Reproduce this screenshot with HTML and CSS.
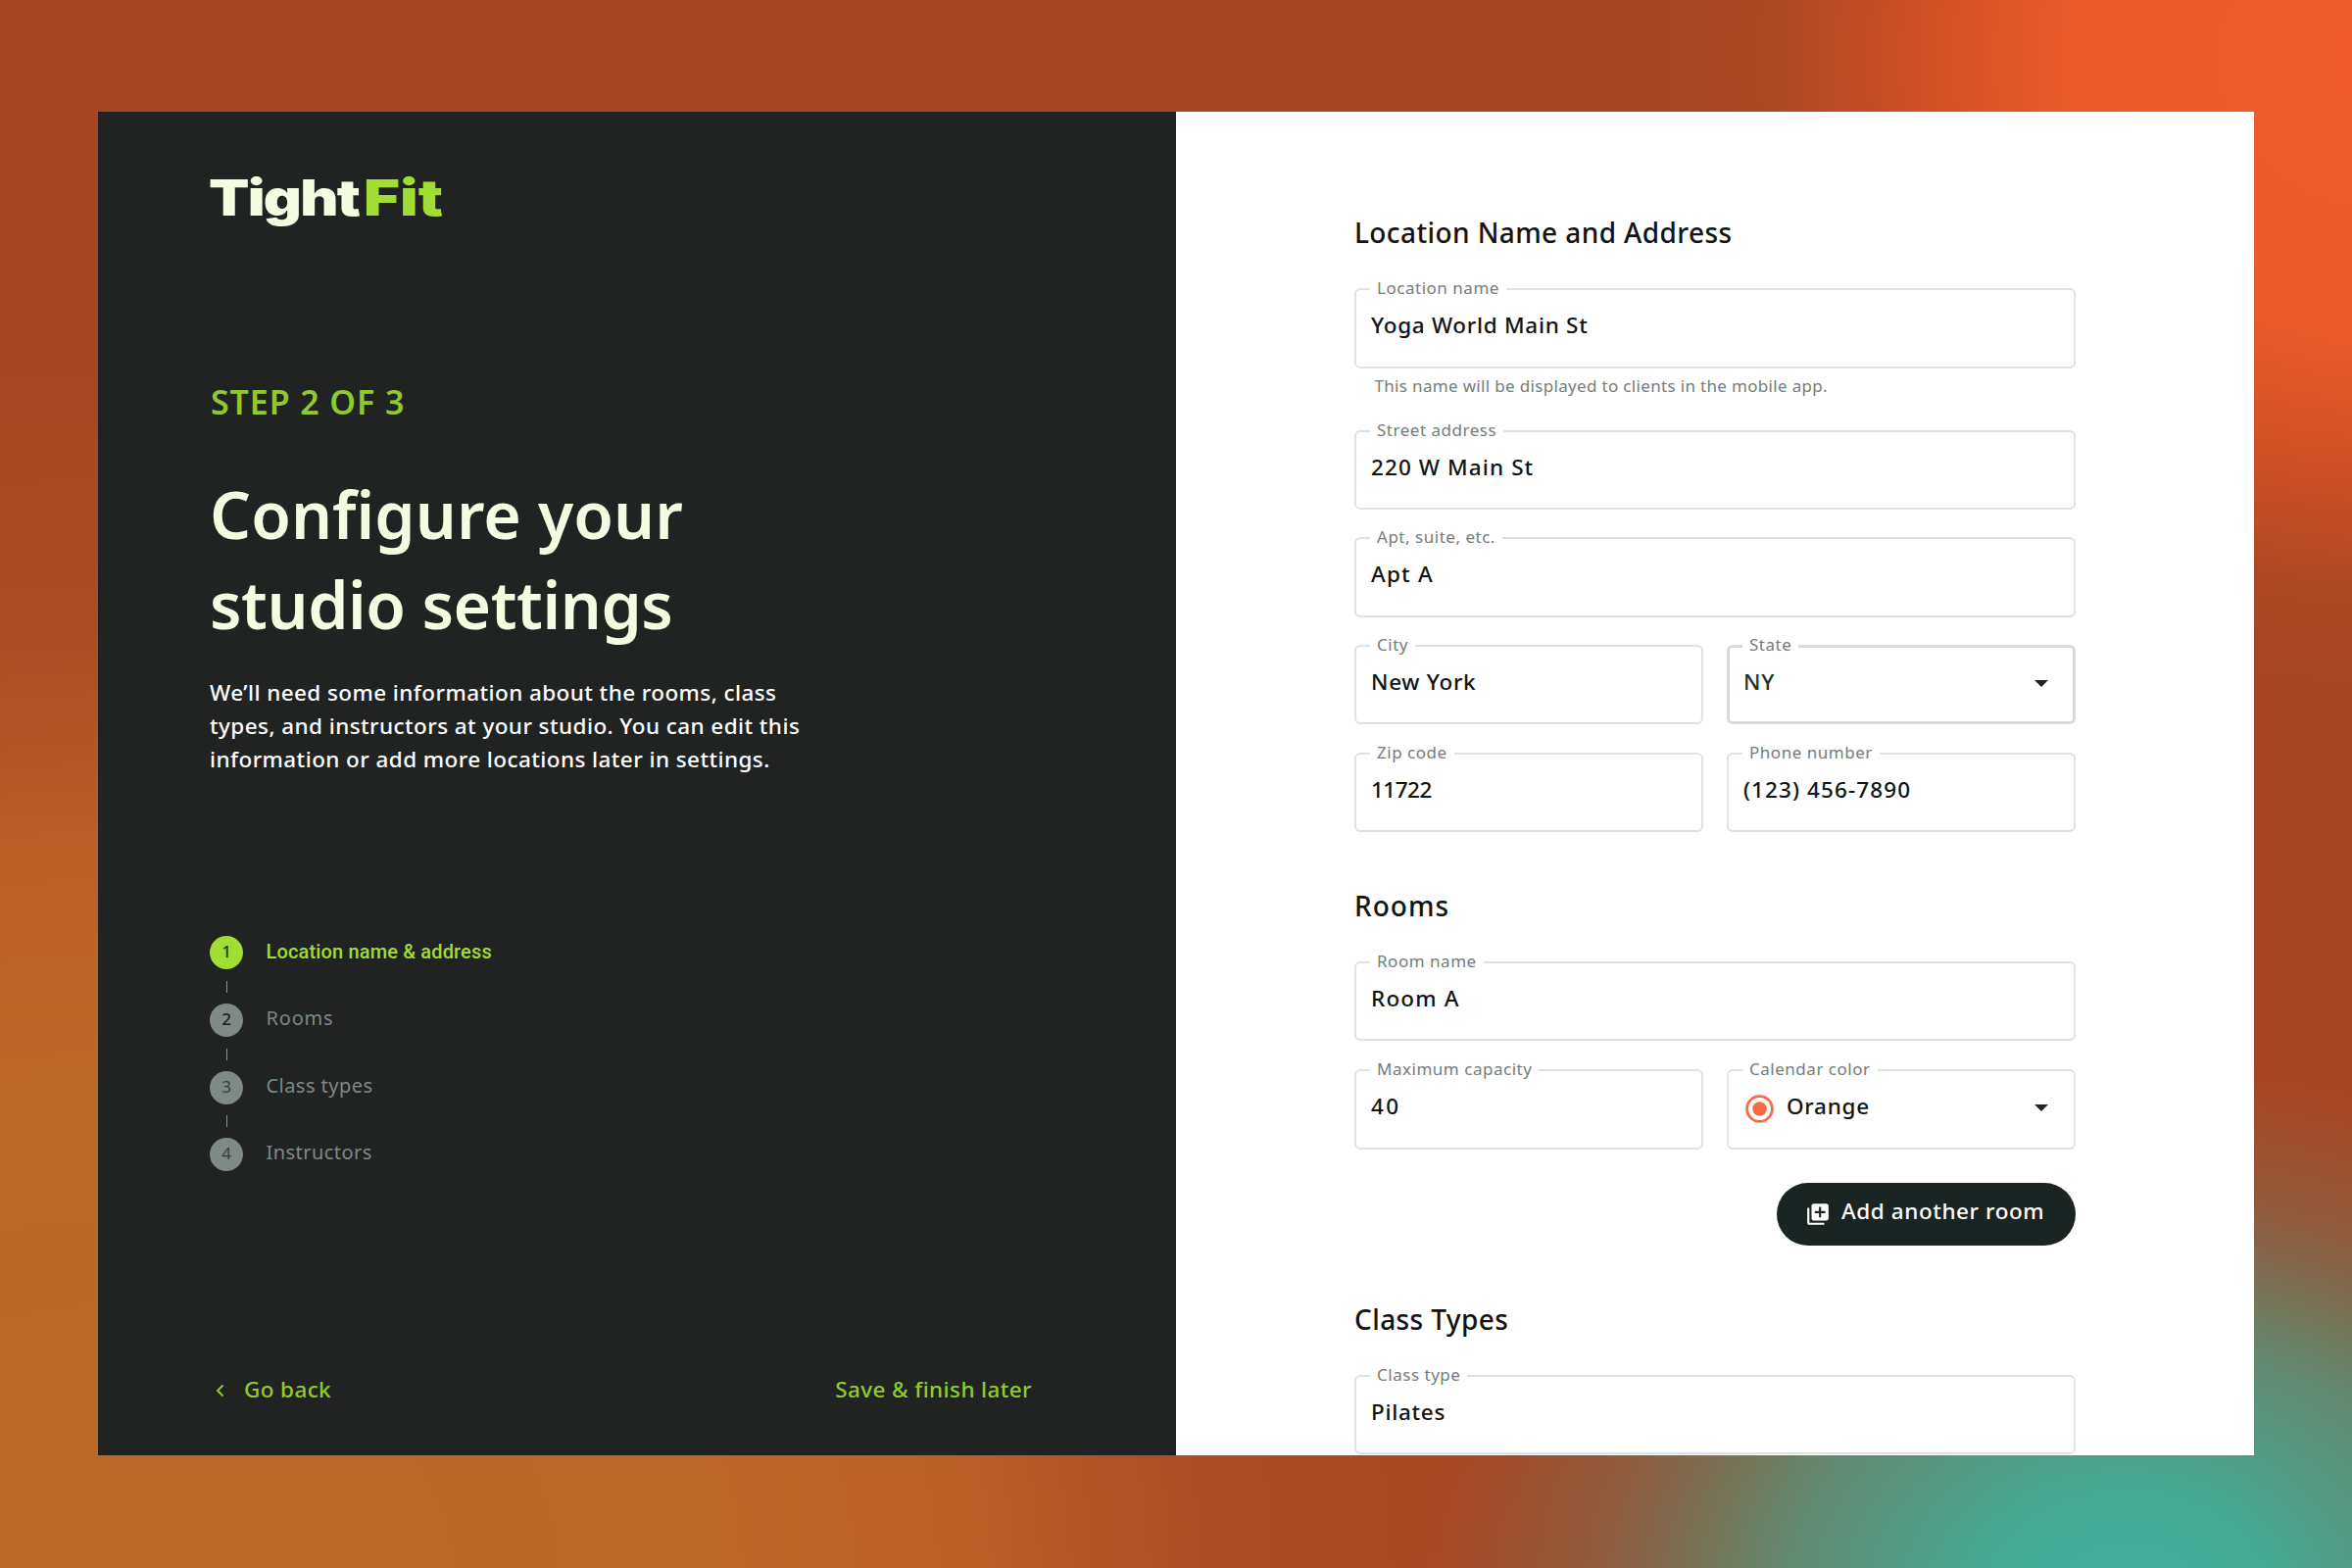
FILE: index.html
```
<!DOCTYPE html>
<html lang="en">
<head>
<meta charset="utf-8">
<title>TightFit – Configure your studio settings</title>
<link rel="stylesheet" href="styles.css">
</head>
<body>
<main class="window">
  <section class="intro">
    <svg class="logo" width="260" height="76" viewBox="0 0 260 76" role="img" aria-label="TightFit">
      <text class="logo-tight" x="-1" y="52" textLength="153" lengthAdjust="spacingAndGlyphs">Tight</text>
      <text class="logo-fit" x="157" y="52" textLength="81" lengthAdjust="spacingAndGlyphs">Fit</text>
    </svg>
    <p class="step-count">STEP 2 OF 3</p>
    <h1 class="title">Configure your<br><span class="title-end">studio settings</span></h1>
    <p class="lead">We’ll need some information about the rooms, class<br>types, and instructors at your studio. You can edit this<br>information or add more locations later in settings.</p>
    <ol class="steps">
      <li class="step step-active"><span class="step-num">1</span><span class="step-name">Location name &amp; address</span></li>
      <li class="step step-current"><span class="step-num">2</span><span class="step-name">Rooms</span></li>
      <li class="step"><span class="step-num">3</span><span class="step-name">Class types</span></li>
      <li class="step"><span class="step-num">4</span><span class="step-name">Instructors</span></li>
    </ol>
    <nav class="actions">
      <a class="action"><svg class="chevron" width="9" height="14" viewBox="0 0 9 14"><path d="M7.5 1.5 2 7l5.500 5.500" fill="none" stroke="currentColor" stroke-width="2"/></svg>Go back</a>
      <a class="action">Save &amp; finish later</a>
    </nav>
  </section>

  <section class="form">
    <h2 class="heading">Location Name and Address</h2>
    <div class="field"><span class="label">Location name</span><span class="value">Yoga World Main St</span></div>
    <p class="helper">This name will be displayed to clients in the mobile app.</p>
    <div class="rows">
      <div class="field"><span class="label">Street address</span><span class="value value-num">220 W Main St</span></div>
      <div class="field"><span class="label">Apt, suite, etc.</span><span class="value value-room">Apt A</span></div>
      <div class="pair">
        <div class="field"><span class="label">City</span><span class="value">New York</span></div>
        <div class="field field-focus"><span class="label">State</span><span class="value">NY</span><svg class="caret" width="14" height="7" viewBox="0 0 14 7"><path d="M0 0h14L7 7z" fill="currentColor"/></svg></div>
      </div>
      <div class="pair">
        <div class="field"><span class="label">Zip code</span><span class="value value-zip">11722</span></div>
        <div class="field"><span class="label">Phone number</span><span class="value value-num">(123) 456-7890</span></div>
      </div>
    </div>

    <h2 class="heading heading-next heading-rooms">Rooms</h2>
    <div class="rows rows-flush">
      <div class="field"><span class="label">Room name</span><span class="value value-room">Room A</span></div>
      <div class="pair">
        <div class="field"><span class="label">Maximum capacity</span><span class="value value-wide">40</span></div>
        <div class="field"><span class="label">Calendar color</span><svg class="swatch" width="29" height="29" viewBox="0 0 29 29"><circle cx="14.500" cy="14.500" r="12.900" fill="none" stroke="currentColor" stroke-width="2.800"/><circle cx="14.500" cy="14.500" r="7.300" fill="currentColor"/></svg><span class="value">Orange</span><svg class="caret" width="14" height="7" viewBox="0 0 14 7"><path d="M0 0h14L7 7z" fill="currentColor"/></svg></div>
      </div>
    </div>
    <button class="add" type="button"><svg width="26" height="26" viewBox="0 0 24 24"><path d="M4 6H2v14c0 1.100.9 2 2 2h14v-2H4V6zm16-4H8c-1.100 0-2 .9-2 2v12c0 1.100.9 2 2 2h12c1.100 0 2-.9 2-2V4c0-1.100-.9-2-2-2zm-1 9h-4v4h-2v-4H9V9h4V5h2v4h4v2z" fill="currentColor"/></svg><span class="add-text">Add another room</span></button>

    <h2 class="heading heading-next">Class Types</h2>
    <div class="field"><span class="label">Class type</span><span class="value">Pilates</span></div>
  </section>
</main>
</body>
</html>
```
FILE: styles.css
```
* { box-sizing: border-box; }

body {
  margin: 0;
  width: 2400px;
  height: 1600px;
  overflow: hidden;
  padding: 114px 100px 0;
  font-family: "Noto Sans", "Open Sans", sans-serif;
  font-weight: 500;
  background:
    radial-gradient(ellipse 720px 540px at 2170px 1630px, #3eb19c 0%, rgba(64,174,153,.95) 20%, rgba(70,165,145,.72) 48%, rgba(90,140,115,.3) 75%, rgba(168,71,36,0) 100%),
    radial-gradient(ellipse 740px 640px at 2440px 60px, #ee5c2e 0%, #e95a2c 45%, rgba(225,85,40,.75) 64%, rgba(190,75,35,.25) 85%, rgba(168,71,36,0) 100%),
    radial-gradient(ellipse 1560px 1380px at 120px 1640px, #b9692a 0%, #bb682a 40%, rgba(192,100,42,.85) 56%, rgba(180,82,38,.4) 72%, rgba(168,71,36,0) 92%),
    #a84623;
}

h1, h2, p, ol { margin: 0; padding: 0; font-weight: inherit; }

.window {
  display: grid;
  grid-template-columns: 1100px 1100px;
  height: 1371px;
  overflow: hidden;
}

/* Left panel */
.intro {
  display: flex;
  flex-direction: column;
  padding: 54px 147px 50px 114px;
  background: #202322;
  color: #fff;
}

.logo { display: block; flex: none; overflow: visible; }
.logo text { font: 900 51px Inter, sans-serif; }
.logo-tight { fill: #f2fde2; letter-spacing: -1.500px; }
.logo-fit { fill: #a1dd33; }

.step-count {
  margin-top: 143.500px;
  padding-left: 1px;
  font-size: 34px;
  line-height: 44px;
  font-weight: 600;
  letter-spacing: .9px;
  color: #8fc92f;
}

.title {
  margin-top: 46.500px;
  font-size: 66px;
  line-height: 92px;
  font-weight: 600;
  letter-spacing: .05px;
  color: #f2fde2;
}

.title-end { letter-spacing: -.42px; }

.lead {
  margin-top: 28px;
  font-size: 22.500px;
  line-height: 33.800px;
  letter-spacing: .42px;
}

.steps {
  display: flex;
  flex-direction: column;
  gap: 34.600px;
  margin-top: 164px;
  list-style: none;
}

.step {
  position: relative;
  display: flex;
  align-items: center;
  gap: 23.500px;
  height: 34px;
  color: #7f8886;
  font-size: 20px;
  font-weight: 400;
  letter-spacing: .45px;
}

/* Connector between two steps */
.step + .step::before {
  content: "";
  position: absolute;
  left: 17px;
  top: -23px;
  width: 1px;
  height: 12px;
  background: #8b9391;
}

.step-num {
  width: 34px;
  height: 34px;
  border-radius: 50%;
  background: #7f8986;
  color: #35423f;
  font-size: 17px;
  line-height: 32px;
  letter-spacing: 0;
  text-align: center;
}

.step-name { padding-bottom: 5px; }
.step-current .step-name { letter-spacing: .8px; }
.step-current .step-num { color: #16211f; font-weight: 500; }
.step-active { color: #a1dd33; font-family: Roboto, sans-serif; font-weight: 500; letter-spacing: .15px; }
.step-active .step-num { background: #a1dd33; color: #24331f; font-family: "Noto Sans", sans-serif; }
.step-active .step-name { padding-bottom: 2px; }

.actions {
  display: flex;
  justify-content: space-between;
  margin-top: auto;
  color: #8fcb2f;
  font-size: 22.500px;
  line-height: 34px;
  letter-spacing: .38px;
}

.action { display: flex; align-items: center; }
.chevron { margin: 2px 20px 0 6px; }

/* Right panel */
.form {
  display: flex;
  flex-direction: column;
  padding: 104px 182px 0;
  background: #fff;
  color: #111413;
}

.heading {
  flex: none;
  margin-bottom: 38px;
  font-size: 28px;
  line-height: 38px;
  letter-spacing: .4px;
}

.heading-next { margin-top: 55.500px; }
.heading-rooms { letter-spacing: 1px; }

.field {
  position: relative;
  flex: none;
  display: flex;
  align-items: flex-start;
  height: 81.500px;
  padding: 20px 16px 0 15px;
  border: 2px solid #dfe2e1;
  border-radius: 6px;
}

.field-focus { border: 3px solid #d7dbda; padding: 19px 15px 0 14px; color: #25302e; }

/* Caption sits over the top border */
.label {
  position: absolute;
  left: 14px;
  top: -14px;
  padding: 0 7px 0 7px;
  background: #fff;
  color: #757c7a;
  font-size: 17px;
  font-weight: 450;
  line-height: 24px;
  letter-spacing: .52px;
  white-space: nowrap;
}

.field-focus .label { left: 13px; top: -15px; }

.value { font-size: 22.500px; line-height: 32px; letter-spacing: .7px; }
.value-num { letter-spacing: 1.100px; }
.value-zip { letter-spacing: -.5px; }
.value-room { letter-spacing: 1.200px; }
.value-wide { letter-spacing: 2.500px; }

.caret { margin: 14px 10px 0 auto; color: #1b2523; }

.swatch { margin: 4px 13px 0 2px; color: #f76b47; }

.helper {
  margin: 6px 0 0 20.500px;
  color: #757c7a;
  font-size: 17px;
  font-weight: 450;
  line-height: 24px;
  letter-spacing: .33px;
}

.rows { display: flex; flex-direction: column; gap: 28.200px; margin-top: 33px; }
.rows-flush { gap: 29px; margin-top: 0; }

.pair { display: grid; grid-template-columns: 356px 356px; gap: 24px; }

.add {
  align-self: flex-end;
  flex: none;
  display: flex;
  align-items: center;
  width: 305px;
  height: 64.500px;
  margin-top: 34px;
  padding: 0 0 0 29px;
  border: 0;
  border-radius: 33px;
  background: #1a2422;
  color: #fff;
  font: 500 22.500px "Noto Sans", sans-serif;
  letter-spacing: .57px;
}

.add-text { padding: 0 0 6px 11px; }
```
